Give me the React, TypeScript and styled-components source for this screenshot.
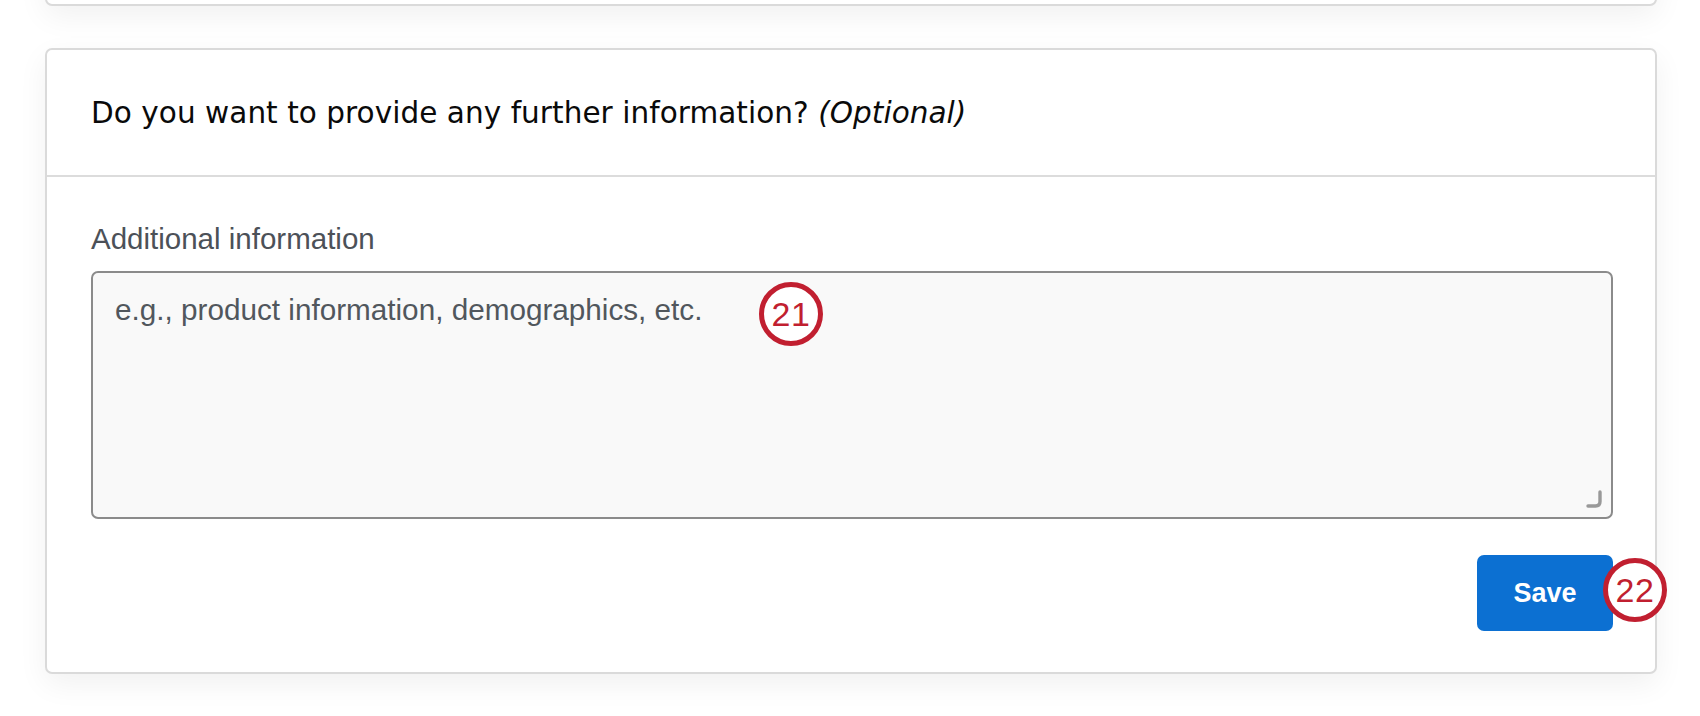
import React from "react";
import styled, { createGlobalStyle } from "styled-components";

const GlobalStyle = createGlobalStyle`
  html, body {
    margin: 0;
    padding: 0;
    background: #ffffff;
  }
  body {
    font-family: "Liberation Sans", Arial, sans-serif;
    overflow: hidden;
  }
`;

const Page = styled.div`
  width: 1700px;
  height: 716px;
  box-sizing: border-box;
  padding: 0 43px 0 45px;
  display: flex;
  flex-direction: column;
  gap: 42px;
  overflow: hidden;
`;

const Card = styled.section`
  background: #ffffff;
  border: 2px solid #dadada;
  border-radius: 7px;
  box-shadow: 0 10px 30px rgba(0, 0, 0, 0.06);
  box-sizing: border-box;
`;

const PreviousCard = styled(Card)`
  height: 60px;
  margin-top: -54px;
  flex: none;
`;

const Header = styled.header`
  height: 125px;
  display: flex;
  align-items: center;
  padding: 0 44px;
  border-bottom: 2px solid #dcdcdc;
`;

const Heading = styled.h2`
  margin: 0;
  font-family: "DejaVu Sans", "Liberation Sans", sans-serif;
  font-weight: 400;
  font-size: 29.5px;
  line-height: 36px;
  color: #0a0a0a;
  letter-spacing: 0.05px;
`;

const Optional = styled.em`
  font-style: italic;
`;

const Body = styled.div`
  padding: 44px 42px 41px 44px;
  display: flex;
  flex-direction: column;
`;

const Label = styled.label`
  font-size: 29.5px;
  line-height: 36px;
  color: #4c5158;
  margin-bottom: 14px;
`;

const FieldWrap = styled.div`
  position: relative;
`;

const TextArea = styled.textarea`
  display: block;
  width: 100%;
  height: 248px;
  box-sizing: border-box;
  border: 2px solid #8b8b8b;
  border-radius: 7px;
  background: #f9f9f9;
  padding: 19px 22px;
  font-family: "Liberation Sans", Arial, sans-serif;
  font-size: 29.7px;
  line-height: 36px;
  color: #333;
  resize: none;
  outline: none;
  &::placeholder {
    color: #51575d;
    opacity: 1;
  }
`;

const Grip = styled.svg`
  position: absolute;
  right: 9px;
  bottom: 10px;
  width: 19px;
  height: 19px;
`;

const Marker = styled.div<{ $fill?: string }>`
  position: absolute;
  width: 64px;
  height: 64px;
  box-sizing: border-box;
  border: 5px solid #c11f30;
  border-radius: 50%;
  background: ${(p) => p.$fill || "transparent"};
  display: flex;
  align-items: center;
  justify-content: center;
  font-family: "Liberation Sans", Arial, sans-serif;
  font-size: 34px;
  color: #c11f30;
  letter-spacing: 0.5px;
`;

const FieldMarker = styled(Marker)`
  left: 668px;
  top: 11px;
`;

const Actions = styled.div`
  display: flex;
  justify-content: flex-end;
  margin-top: 36px;
`;

const ButtonWrap = styled.div`
  position: relative;
`;

const SaveButton = styled.button`
  width: 136px;
  height: 76px;
  border: none;
  border-radius: 7px;
  background: #0c70d2;
  color: #ffffff;
  font-family: "Liberation Sans", Arial, sans-serif;
  font-size: 27px;
  font-weight: 600;
  cursor: pointer;
`;

const ButtonMarker = styled(Marker)`
  left: 126px;
  top: 3px;
`;

export default function App() {
  return (
    <>
      <GlobalStyle />
      <Page>
        <PreviousCard />
        <Card>
          <Header>
            <Heading>
              Do you want to provide any further information?{" "}
              <Optional>(Optional)</Optional>
            </Heading>
          </Header>
          <Body>
            <Label htmlFor="additional">Additional information</Label>
            <FieldWrap>
              <TextArea
                id="additional"
                placeholder="e.g., product information, demographics, etc."
              />
              <Grip viewBox="0 0 19 19">
                <path
                  d="M15 2 V11.5 Q15 16 10.5 16 H3"
                  fill="none"
                  stroke="#999999"
                  strokeWidth="3.4"
                  strokeLinecap="round"
                />
              </Grip>
              <FieldMarker $fill="#ffffff">21</FieldMarker>
            </FieldWrap>
            <Actions>
              <ButtonWrap>
                <SaveButton>Save</SaveButton>
                <ButtonMarker $fill="#ffffff">22</ButtonMarker>
              </ButtonWrap>
            </Actions>
          </Body>
        </Card>
      </Page>
    </>
  );
}
